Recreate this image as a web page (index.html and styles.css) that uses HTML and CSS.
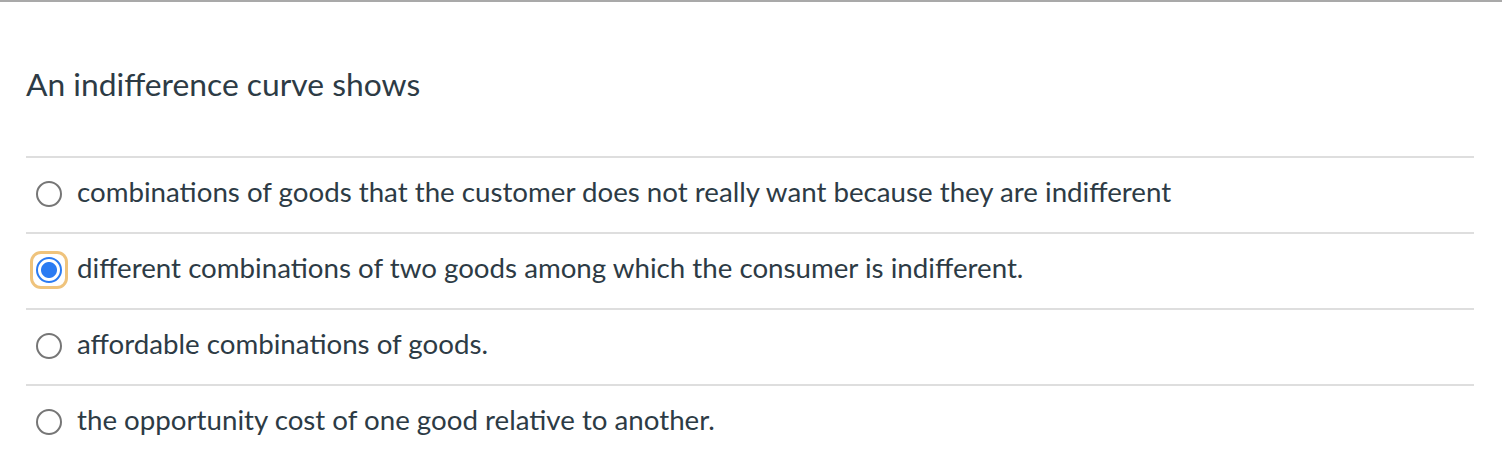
FILE: index.html
```html
<!DOCTYPE html>
<html lang="en">
<head>
<meta charset="utf-8">
<title>Quiz question</title>
<link rel="stylesheet" href="styles.css">
</head>
<body>
<div class="question">
  <div class="title">An indifference curve shows</div>
  <div class="answers">
    <label class="option">
      <span class="radio-wrap"><span class="radio"></span></span>
      <span class="text">combinations of goods that the customer does not really want because they are indifferent</span>
    </label>
    <label class="option">
      <span class="radio-wrap focused"><span class="radio checked"></span></span>
      <span class="text">different combinations of two goods among which the consumer is indifferent.</span>
    </label>
    <label class="option">
      <span class="radio-wrap"><span class="radio"></span></span>
      <span class="text">affordable combinations of goods.</span>
    </label>
    <label class="option">
      <span class="radio-wrap"><span class="radio"></span></span>
      <span class="text">the opportunity cost of one good relative to another.</span>
    </label>
  </div>
</div>
</body>
</html>
```
FILE: styles.css
```css
html, body {
  margin: 0;
  padding: 0;
  background: #ffffff;
}
body {
  border-top: 2px solid #a9a9a9;
  font-family: Lato, "Liberation Sans", sans-serif;
  color: #2d3b45;
}
.question {
  padding: 0 28px 0 26px;
}
.title {
  height: 154px;
  box-sizing: border-box;
  padding-top: 60px;
  padding-left: 0;
  font-size: 31.8px;
  line-height: 44px;
}
.answers {
  display: flex;
  flex-direction: column;
}
.option {
  display: flex;
  align-items: center;
  height: 76px;
  box-sizing: border-box;
  border-top: 2px solid #dedede;
  padding-bottom: 2px;
}
.radio-wrap {
  display: flex;
  align-items: center;
  justify-content: center;
  width: 38px;
  height: 38px;
  margin-left: 4px;
  margin-right: 9px;
  box-sizing: border-box;
  border: 3px solid transparent;
  border-radius: 11px;
}
.radio-wrap.focused {
  border-color: #efc37c;
}
.radio {
  display: block;
  width: 26px;
  height: 26px;
  box-sizing: border-box;
  border: 2px solid #767676;
  border-radius: 50%;
  background: #ffffff;
}
.radio.checked {
  border-color: #2b7bf2;
  background: radial-gradient(circle, #2b7bf2 0 7.5px, #ffffff 8.5px);
}
.text {
  font-size: 27.7px;
  line-height: 34px;
  margin-bottom: 4px;
}
```
